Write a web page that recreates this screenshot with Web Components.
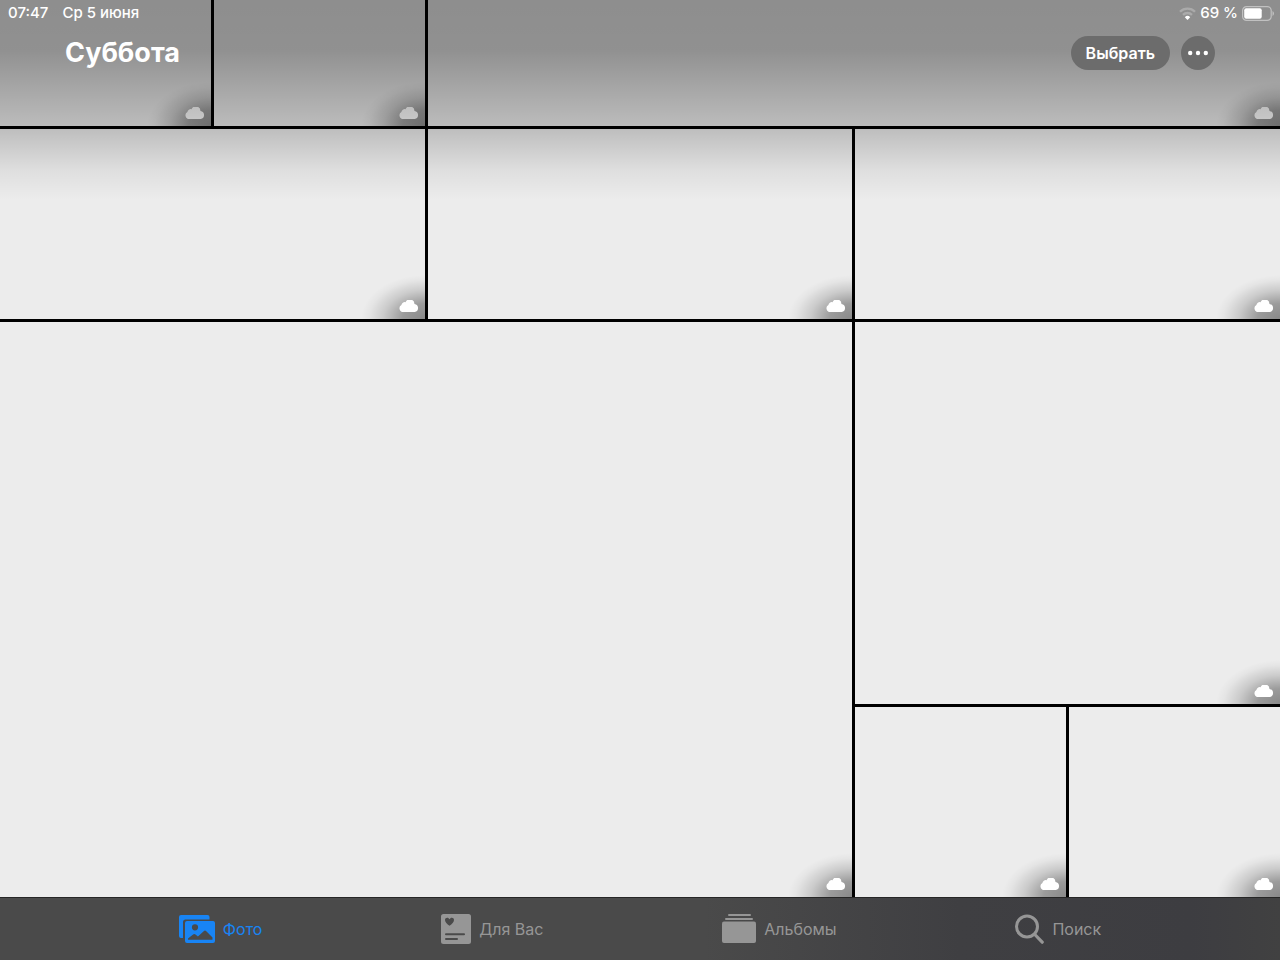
<!DOCTYPE html>
<html lang="ru">
<head>
<meta charset="utf-8">
<meta name="viewport" content="width=device-width, initial-scale=1">
<title>Фото</title>
<style>
  body {
    margin: 0;
    background: #000;
    color: #fff;
    font-family: Inter, "Liberation Sans", sans-serif;
  }
</style>
</head>
<body>

<photos-app>
  <top-bar slot="top" heading="Суббота">
    <status-bar slot="status" time="07:47" date="Ср 5 июня" battery="69"></status-bar>
    <pill-button slot="actions">Выбрать</pill-button>
    <pill-button slot="actions" round label="Ещё">
      <svg width="20" height="6" viewBox="0 0 20 6" fill="currentColor">
        <circle cx="2.2" cy="3" r="2.2"/><circle cx="10" cy="3" r="2.2"/><circle cx="17.8" cy="3" r="2.2"/>
      </svg>
    </pill-button>
  </top-bar>

  <photo-grid>
    <photo-tile></photo-tile>
    <photo-tile></photo-tile>
    <photo-tile cols="4"></photo-tile>
    <photo-tile cols="2"></photo-tile>
    <photo-tile cols="2"></photo-tile>
    <photo-tile cols="2"></photo-tile>
    <photo-tile cols="4" rows="3"></photo-tile>
    <photo-tile cols="2" rows="2"></photo-tile>
    <photo-tile></photo-tile>
    <photo-tile></photo-tile>
  </photo-grid>

  <tab-bar slot="bottom">
    <tab-item icon="photos" active>Фото</tab-item>
    <tab-item icon="foryou">Для Вас</tab-item>
    <tab-item icon="albums">Альбомы</tab-item>
    <tab-item icon="search">Поиск</tab-item>
  </tab-bar>
</photos-app>

<script>
// <photos-app>: the grid fills the screen, the top bar floats over it
class PhotosApp extends HTMLElement {
  constructor() {
    super();
    this.attachShadow({ mode: "open" });
    this.shadowRoot.innerHTML = /* html */`
      <style>
        :host {
          position: relative;
          display: flex;
          flex-direction: column;
          height: 100vh;
        }
        main { flex: 1; display: flex; min-height: 0; }
        header { position: absolute; top: 0; left: 0; right: 0; z-index: 1; pointer-events: none; }
      </style>
      <header><slot name="top"></slot></header>
      <main><slot></slot></main>
      <slot name="bottom"></slot>
    `;
  }
}

// <top-bar heading>: darkened area with the status line, title and actions
class TopBar extends HTMLElement {
  connectedCallback() {
    this.attachShadow({ mode: "open" });
    this.shadowRoot.innerHTML = /* html */`
      <style>
        :host {
          display: block;
          padding-bottom: 130px;
          background: linear-gradient(rgba(0, 0, 0, .4) 0, rgba(0, 0, 0, .39) 50px,
            rgba(0, 0, 0, .2) 128px, rgba(0, 0, 0, .06) 170px, transparent 200px);
        }
        .row {
          display: flex;
          align-items: center;
          justify-content: space-between;
          padding: 10px 65px 0;
        }
        h1 { margin: 0; font-size: 27px; line-height: 34px; font-weight: 700; }
        .actions { display: flex; gap: 11px; pointer-events: auto; }
      </style>
      <slot name="status"></slot>
      <div class="row">
        <h1></h1>
        <div class="actions"><slot name="actions"></slot></div>
      </div>
    `;
    this.shadowRoot.querySelector("h1").textContent = this.getAttribute("heading");
  }
}

// <status-bar time date battery>
class StatusBar extends HTMLElement {
  connectedCallback() {
    const level = Number(this.getAttribute("battery"));
    this.attachShadow({ mode: "open" });
    this.shadowRoot.innerHTML = /* html */`
      <style>
        :host {
          display: flex;
          justify-content: space-between;
          padding: 3px 6px 3px 8px;
          font-size: 15px;
          line-height: 20px;
          font-weight: 500;
        }
        div { display: flex; align-items: center; }
        .left { gap: 14px; }
        .right { gap: 4px; }
        svg { display: block; }
      </style>
      <div class="left"><span>${this.getAttribute("time")}</span><span>${this.getAttribute("date")}</span></div>
      <div class="right">
        <svg width="17" height="13" viewBox="0 0 17 13" fill="none" stroke="#fff" stroke-width="2.3">
          <path d="M1 4.700a10.600 10.600 0 0 1 15 0" opacity=".25"/>
          <path d="M4 7.900a6.300 6.300 0 0 1 9 0" opacity=".25"/>
          <path d="M8.500 13 5.800 10.200a3.800 3.800 0 0 1 5.400 0z" fill="#fff" stroke="none"/>
        </svg>
        <span>${level} %</span>
        <svg width="32" height="15" viewBox="0 0 32 15">
          <rect x=".6" y=".6" width="28.6" height="13.8" rx="4" fill="none" stroke="#fff" stroke-opacity=".45" stroke-width="1.2"/>
          <rect x="2.2" y="2.2" width="${25.4 * level / 100}" height="10.6" rx="2" fill="#fff"/>
          <path d="M30.500 5v5q1.500-.8 1.500-2.500T30.500 5z" fill="#fff" opacity=".45"/>
        </svg>
      </div>
    `;
  }
}

// <pill-button round? label?>: translucent capsule on top of photos
class PillButton extends HTMLElement {
  connectedCallback() {
    this.attachShadow({ mode: "open" });
    this.shadowRoot.innerHTML = /* html */`
      <style>
        :host { display: block; }
        button {
          display: flex;
          align-items: center;
          justify-content: center;
          height: 34px;
          padding: 0 15px;
          border: 0;
          border-radius: 17px;
          background: #6c6c6c;
          color: #fff;
          font: 600 16px/20px Inter, "Liberation Sans", sans-serif;
        }
        :host([round]) button { width: 34px; padding: 0; }
      </style>
      <button type="button"><slot></slot></button>
    `;
    if (this.hasAttribute("label")) {
      this.shadowRoot.querySelector("button").setAttribute("aria-label", this.getAttribute("label"));
    }
  }
}

// <photo-grid>: six columns, the first row is partly scrolled away
class PhotoGrid extends HTMLElement {
  constructor() {
    super();
    this.attachShadow({ mode: "open" });
    this.shadowRoot.innerHTML = /* html */`
      <style>
        :host {
          flex: 1;
          display: grid;
          grid-template-columns: repeat(6, minmax(0, 1fr));
          grid-template-rows: minmax(0, 2fr) repeat(4, minmax(0, 3fr));
          gap: 3px;
        }
      </style>
      <slot></slot>
    `;
  }
}

// <photo-tile cols rows>: empty photo with the iCloud mark in the corner
class PhotoTile extends HTMLElement {
  connectedCallback() {
    this.attachShadow({ mode: "open" });
    this.shadowRoot.innerHTML = /* html */`
      <style>
        :host {
          display: flex;
          align-items: flex-end;
          justify-content: flex-end;
          grid-column: span ${this.getAttribute("cols") ?? 1};
          grid-row: span ${this.getAttribute("rows") ?? 1};
          background:
            radial-gradient(64px 44px at 100% 100%, rgba(0, 0, 0, .42), rgba(0, 0, 0, .34) 35%,
              rgba(0, 0, 0, .14) 65%, rgba(0, 0, 0, .03) 88%, transparent) #ececec;
        }
        svg { display: block; padding: 7px 6px; }
      </style>
      <svg width="20" height="12" viewBox="0 0 20 12" fill="#fff">
        <path d="M4.200 12A3.800 3.800 0 0 1 2.400 4.900A3.300 3.300 0 0 1 6.500 2.200A4.700 4.700 0 0 1 15.500 3.900A4.100 4.100 0 0 1 15.700 12z"/>
      </svg>
    `;
  }
}

class TabBar extends HTMLElement {
  constructor() {
    super();
    this.attachShadow({ mode: "open" });
    this.shadowRoot.innerHTML = /* html */`
      <style>
        :host {
          display: block;
          border-top: 1px solid #262626;
          background: linear-gradient(90deg, #4a4a4a 55%, #3f3f42 75%, #3d3d41 93%, #414141);
        }
        nav {
          display: flex;
          justify-content: space-evenly;
          align-items: center;
          height: 62px;
        }
      </style>
      <nav><slot></slot></nav>
    `;
  }
}

const TAB_ICONS = {
  photos: `<svg width="36" height="28" viewBox="0 0 36 28" fill="currentColor">
    <path d="M2 0h26.500a2 2 0 0 1 2 2v2.500H6.500a2.500 2.500 0 0 0-2.500 2.500V23H2a2 2 0 0 1-2-2V2a2 2 0 0 1 2-2z"/>
    <path fill-rule="evenodd" d="M8 6h26a2 2 0 0 1 2 2v18a2 2 0 0 1-2 2H8a2 2 0 0 1-2-2V8a2 2 0 0 1 2-2zM16 9.200a3.100 3.100 0 1 0 0 6.200a3.100 3.100 0 1 0 0-6.200zM9 24.800h24.500v-2.400l-6.200-6.200q-1.300-1.200-2.600 0l-5.800 5.400l-2.400-2.200q-1.200-1-2.400 0L9 23.500z"/>
  </svg>`,
  foryou: `<svg width="30" height="30" viewBox="0 0 30 30" fill="currentColor">
    <path fill-rule="evenodd" d="M2.500 0h25A2.500 2.500 0 0 1 30 2.500v25a2.500 2.500 0 0 1-2.500 2.500h-25A2.500 2.500 0 0 1 0 27.500v-25A2.500 2.500 0 0 1 2.500 0zM8.500 11.700C11 10 13 8.100 13 6C13 4.600 12 3.700 10.900 3.700C9.800 3.700 9 4.300 8.500 5.200C8 4.300 7.200 3.700 6.100 3.700C5 3.700 4 4.600 4 6C4 8.100 6 10 8.500 11.700zM5 19.200a1 1 0 0 0 0 2h18a1 1 0 0 0 0-2zM5 24a1 1 0 0 0 0 2h11a1 1 0 0 0 0-2z"/>
  </svg>`,
  albums: `<svg width="34" height="30" viewBox="0 0 34 30" fill="currentColor">
    <rect x="6" y="0" width="23" height="2" rx="1"/>
    <rect x="3" y="4" width="28" height="2" rx="1"/>
    <rect y="7.500" width="34" height="21.500" rx="2"/>
  </svg>`,
  search: `<svg width="29" height="30" viewBox="0 0 29 30" fill="none" stroke="currentColor" stroke-linecap="round">
    <circle cx="12" cy="12.500" r="10.500" stroke-width="3"/>
    <path d="M19.800 20.500l7.400 7.700" stroke-width="3.200"/>
  </svg>`,
};

// <tab-item icon active?>
class TabItem extends HTMLElement {
  connectedCallback() {
    this.attachShadow({ mode: "open" });
    this.shadowRoot.innerHTML = /* html */`
      <style>
        :host { display: block; }
        button {
          display: flex;
          align-items: center;
          gap: 8px;
          padding: 0;
          border: 0;
          background: none;
          color: #969696;
          font: 400 16px/20px Inter, "Liberation Sans", sans-serif;
        }
        :host([active]) button { color: #1884f4; }
        svg { display: block; }
      </style>
      <button type="button">${TAB_ICONS[this.getAttribute("icon")]}<span><slot></slot></span></button>
    `;
  }
}

customElements.define("photos-app", PhotosApp);
customElements.define("top-bar", TopBar);
customElements.define("status-bar", StatusBar);
customElements.define("pill-button", PillButton);
customElements.define("photo-grid", PhotoGrid);
customElements.define("photo-tile", PhotoTile);
customElements.define("tab-bar", TabBar);
customElements.define("tab-item", TabItem);
</script>
</body>
</html>
